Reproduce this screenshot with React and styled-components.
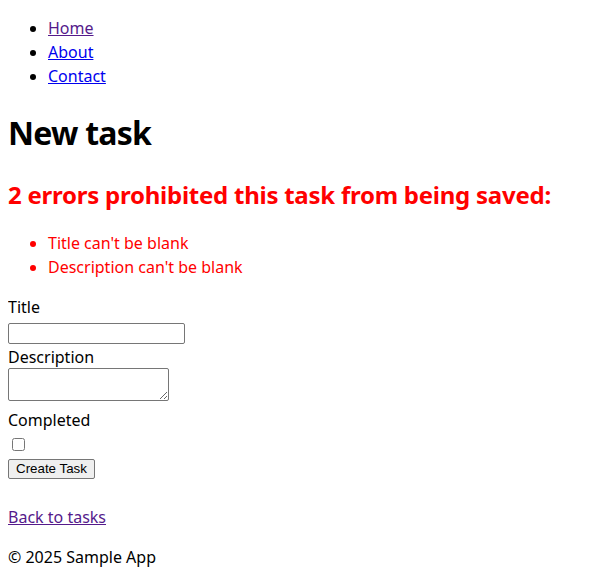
import React from "react";
import styled, { createGlobalStyle } from "styled-components";

const GlobalStyle = createGlobalStyle`
  body {
    margin: 0 8px 8px;
    font-family: "Noto Sans", sans-serif;
    font-size: 16px;
    line-height: 1.5;
    color: #000;
    background: #fff;
  }
`;

const NavList = styled.ul`
  margin: 16px 0;
  padding-left: 40px;
`;

const Link = styled.a`
  color: ${(p) => (p.$visited ? "#551a8b" : "#0000ee")};
  text-decoration: underline;
`;

const Title = styled.h1`
  font-size: 32px;
  font-weight: 700;
  letter-spacing: -0.75px;
  margin: 21.44px 0 19.44px;
`;

const ErrorBox = styled.div`
  color: red;
`;

const ErrorTitle = styled.h2`
  font-size: 24px;
  font-weight: 700;
  letter-spacing: -0.25px;
  margin: 16px 0 18px;
`;

const ErrorList = styled.ul`
  margin: 16px 0 17px;
  padding-left: 40px;
`;

const Label = styled.label`
  display: block;
  line-height: 22px;
`;

const TextInput = styled.input`
  display: block;
  box-sizing: border-box;
  margin: 5px 0 2px;
  font-family: "Liberation Sans", Arial, sans-serif;
  font-size: 13.33px;
  width: 177px;
  height: 21px;
  padding: 1px 2px;
  border: 1px solid #767676;
  border-radius: 2px;
`;

const TextArea = styled.textarea`
  display: block;
  box-sizing: border-box;
  margin: 0 0 8px;
  font-family: "Liberation Mono", monospace;
  font-size: 13.33px;
  width: 161px;
  height: 33px;
  padding: 2px;
  border: 1px solid #767676;
  border-radius: 2px;
`;

const Checkbox = styled.input`
  display: block;
  width: 13px;
  height: 13px;
  margin: 7px 0 0 4px;
`;

const Button = styled.button`
  display: block;
  box-sizing: border-box;
  margin-top: 8px;
  height: 20px;
  font-family: "Liberation Sans", Arial, sans-serif;
  font-size: 13.33px;
  line-height: 16px;
  padding: 1px 7px;
  border: 1px solid #767676;
  border-radius: 2px;
  background: #efefef;
  color: #000;
`;

const BackRow = styled.div`
  margin-top: 26px;
`;

const Footer = styled.footer`
  p {
    margin: 16px 0;
  }
`;

export default function App() {
  return (
    <>
      <GlobalStyle />
      <nav>
        <NavList>
          <li><Link href="#" $visited>Home</Link></li>
          <li><Link href="#">About</Link></li>
          <li><Link href="#">Contact</Link></li>
        </NavList>
      </nav>

      <Title>New task</Title>

      <form onSubmit={(e) => e.preventDefault()}>
        <ErrorBox>
          <ErrorTitle>2 errors prohibited this task from being saved:</ErrorTitle>
          <ErrorList>
            <li>Title can't be blank</li>
            <li>Description can't be blank</li>
          </ErrorList>
        </ErrorBox>

        <div>
          <Label>Title</Label>
          <TextInput type="text" />
        </div>
        <div>
          <Label>Description</Label>
          <TextArea />
        </div>
        <div>
          <Label>Completed</Label>
          <Checkbox type="checkbox" />
        </div>
        <div>
          <Button type="submit">Create Task</Button>
        </div>
      </form>

      <BackRow>
        <Link href="#" $visited>Back to tasks</Link>
      </BackRow>

      <Footer>
        <p>© 2025 Sample App</p>
      </Footer>
    </>
  );
}
